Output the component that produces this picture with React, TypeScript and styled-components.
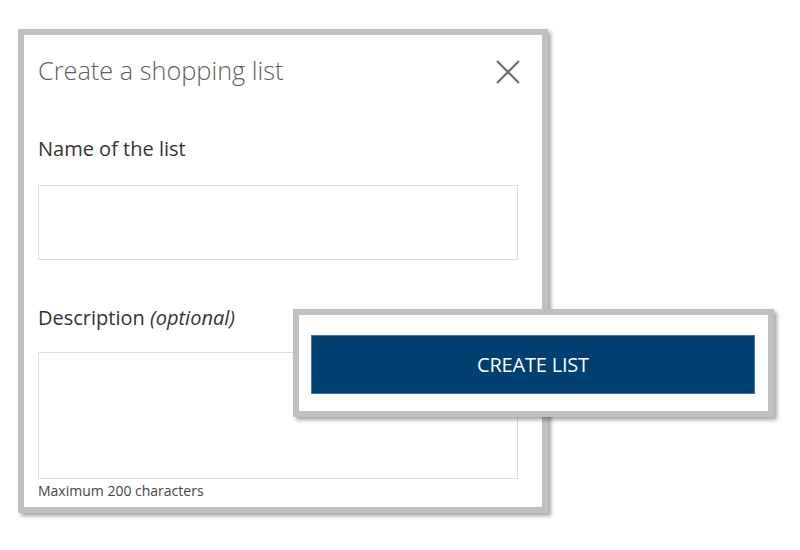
import React from "react";
import styled, { createGlobalStyle } from "styled-components";

const Global = createGlobalStyle`
  html, body { margin: 0; padding: 0; background: #ffffff; }
  body { font-family: "Open Sans", "Noto Sans", sans-serif; }
  * { box-sizing: border-box; }
`;

const Stage = styled.div`
  position: relative;
  width: 800px;
  height: 550px;
  padding: 29px 0 0 18px;
`;

const Dialog = styled.div`
  width: 530px;
  height: 484px;
  background: #ffffff;
  border: 6px solid #c0c0c0;
  box-shadow: 3px 3px 4px rgba(0, 0, 0, 0.35);
  padding: 19px 22px 0 14px;
  display: flex;
  flex-direction: column;
`;

const Header = styled.div`
  display: flex;
  align-items: flex-start;
  justify-content: space-between;
`;

const Title = styled.h1`
  margin: 0;
  font-family: "Open Sans", sans-serif;
  font-weight: 300;
  font-size: 25.3px;
  line-height: 32px;
  color: #5f5f5f;
`;

const CloseButton = styled.button`
  border: none;
  background: none;
  padding: 0;
  margin-top: 6px;
  width: 24px;
  height: 24px;
  display: flex;
  align-items: center;
  justify-content: center;
  cursor: pointer;
`;

const Label = styled.label<{ $top: number }>`
  display: block;
  margin-top: ${(p) => p.$top}px;
  font-size: 20px;
  line-height: 26px;
  color: #333333;
  em { font-style: italic; }
`;

const Field = styled.div<{ $height: number; $top: number }>`
  width: 480px;
  height: ${(p) => p.$height}px;
  margin-top: ${(p) => p.$top}px;
  border: 1px solid #dcdcdc;
  background: #ffffff;
`;

const Hint = styled.div`
  margin-top: 3px;
  font-size: 14px;
  line-height: 18px;
  color: #444444;
`;

const ActionCard = styled.div`
  position: absolute;
  left: 293px;
  top: 309px;
  width: 481px;
  height: 108px;
  background: #ffffff;
  border: 6px solid #c0c0c0;
  box-shadow: 3px 3px 4px rgba(0, 0, 0, 0.35);
  padding: 20px 13px 0 12px;
`;

const PrimaryButton = styled.button`
  width: 444px;
  height: 59px;
  background: #003f71;
  border: 1px solid #3f73a5;
  color: #ffffff;
  font-family: "Open Sans", sans-serif;
  font-size: 20px;
  font-weight: 400;
  letter-spacing: -0.2px;
  text-transform: uppercase;
  cursor: pointer;
`;

export default function App() {
  return (
    <>
      <Global />
      <Stage>
        <Dialog>
          <Header>
            <Title>Create a shopping list</Title>
            <CloseButton aria-label="Close">
              <svg width="24" height="24" viewBox="0 0 24 24">
                <path d="M1 1 L23 23 M23 1 L1 23" stroke="#6a6a6a" strokeWidth="2" fill="none" />
              </svg>
            </CloseButton>
          </Header>
          <Label $top={50}>Name of the list</Label>
          <Field $top={23} $height={75} />
          <Label $top={45}>
            Description <em>(optional)</em>
          </Label>
          <Field $top={21} $height={127} />
          <Hint>Maximum 200 characters</Hint>
        </Dialog>
        <ActionCard>
          <PrimaryButton>Create List</PrimaryButton>
        </ActionCard>
      </Stage>
    </>
  );
}
